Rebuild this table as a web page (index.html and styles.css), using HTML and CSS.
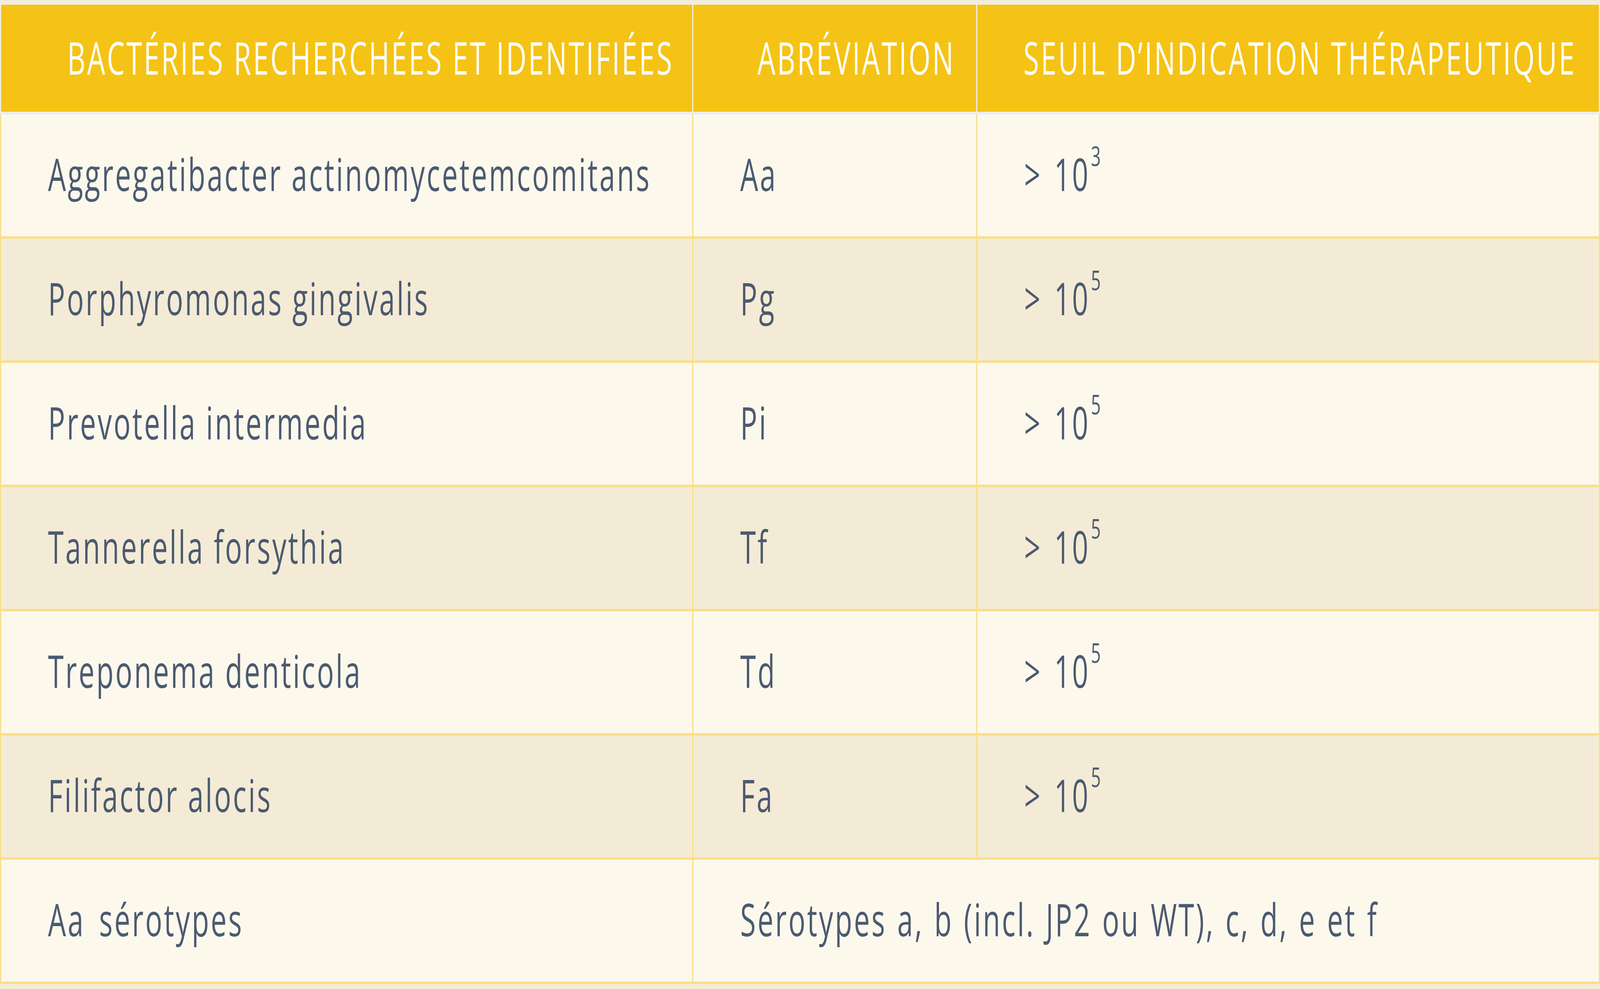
FILE: index.html
```html
<!DOCTYPE html>
<html lang="fr">
<head>
<meta charset="utf-8">
<title>Bactéries recherchées</title>
<link rel="stylesheet" href="styles.css">
</head>
<body>
<div class="table" role="table">
  <div class="row head" role="row">
    <div class="cell hcell first pad-h1" role="columnheader"><span class="txt">BACTÉRIES RECHERCHÉES ET IDENTIFIÉES</span></div>
    <div class="cell hcell pad-h2" role="columnheader"><span class="txt">ABRÉVIATION</span></div>
    <div class="cell hcell pad-h3" role="columnheader"><span class="txt">SEUIL D’INDICATION THÉRAPEUTIQUE</span></div>
  </div>
  <div class="row light" role="row">
    <div class="cell bcell first" role="cell"><span class="txt">Aggregatibacter actinomycetemcomitans</span></div>
    <div class="cell bcell" role="cell"><span class="txt">Aa</span></div>
    <div class="cell bcell" role="cell"><span class="txt thr">&gt; 10<sup>3</sup></span></div>
  </div>
  <div class="row dark" role="row">
    <div class="cell bcell first" role="cell"><span class="txt">Porphyromonas gingivalis</span></div>
    <div class="cell bcell" role="cell"><span class="txt">Pg</span></div>
    <div class="cell bcell" role="cell"><span class="txt thr">&gt; 10<sup>5</sup></span></div>
  </div>
  <div class="row light" role="row">
    <div class="cell bcell first" role="cell"><span class="txt">Prevotella intermedia</span></div>
    <div class="cell bcell" role="cell"><span class="txt">Pi</span></div>
    <div class="cell bcell" role="cell"><span class="txt thr">&gt; 10<sup>5</sup></span></div>
  </div>
  <div class="row dark" role="row">
    <div class="cell bcell first" role="cell"><span class="txt">Tannerella forsythia</span></div>
    <div class="cell bcell" role="cell"><span class="txt">Tf</span></div>
    <div class="cell bcell" role="cell"><span class="txt thr">&gt; 10<sup>5</sup></span></div>
  </div>
  <div class="row light" role="row">
    <div class="cell bcell first" role="cell"><span class="txt">Treponema denticola</span></div>
    <div class="cell bcell" role="cell"><span class="txt">Td</span></div>
    <div class="cell bcell" role="cell"><span class="txt thr">&gt; 10<sup>5</sup></span></div>
  </div>
  <div class="row dark" role="row">
    <div class="cell bcell first" role="cell"><span class="txt">Filifactor alocis</span></div>
    <div class="cell bcell" role="cell"><span class="txt">Fa</span></div>
    <div class="cell bcell" role="cell"><span class="txt thr">&gt; 10<sup>5</sup></span></div>
  </div>
  <div class="row light" role="row">
    <div class="cell bcell first" role="cell"><span class="txt sero">Aa sérotypes</span></div>
    <div class="cell bcell span2" role="cell"><span class="txt wide">Sérotypes a, b (incl. JP2 ou WT), c, d, e et f</span></div>
  </div>
</div>
</body>
</html>
```
FILE: styles.css
```css
:root {
  /* the reference was laid out on a 6502px-wide canvas; widths are kept proportional */
  --squash: 0.63;
  --vb: 0.0923vw;          /* 6px of the 6502 canvas */
  --head-line: #efede8;
  --body-line: #fadf88;
}

html, body {
  margin: 0;
  padding: 0;
}

body {
  background: #f3ebd5;
  padding-top: 5px;
  font-family: "Open Sans", "Noto Sans", sans-serif;
}

.table {
  display: grid;
  grid-template-columns: 2818fr 1154fr 2530fr;
}

.row {
  display: contents;
}

.cell {
  box-sizing: border-box;
  display: flex;
  align-items: center;
  min-width: 0;
  font-size: 115px;
  white-space: nowrap;
  line-height: 1.36;
}

.txt {
  display: inline-block;
  transform: scaleX(var(--squash));
  transform-origin: 0 50%;
}

/* header */
.hcell {
  height: 288px;
  background: #f5c315;
  color: #ffffff;
  letter-spacing: 7px;
  border-top: 7px solid var(--head-line);
  border-bottom: 7px solid var(--head-line);
  border-right: var(--vb) solid var(--head-line);
  padding-bottom: 4px;
}

.hcell.first {
  border-left: var(--vb) solid var(--head-line);
}

.pad-h1 {
  padding-left: 4.12vw;
}

.pad-h2 {
  padding-left: 4.01vw;
}

.pad-h3 {
  padding-left: 2.88vw;
}

/* body */
.bcell {
  height: 318px;
  color: #4c5a71;
  letter-spacing: 7px;
  padding-left: 2.92vw;
  padding-bottom: 8px;
  border-right: var(--vb) solid var(--body-line);
  border-bottom: 6px solid var(--body-line);
}

.bcell.first {
  border-left: var(--vb) solid var(--body-line);
}

.light .bcell {
  background: #fcf8ec;
}

.dark .bcell {
  background: #f3ebd5;
}

.span2 {
  grid-column: span 2;
}

.sero {
  word-spacing: 20px;
}

.wide {
  word-spacing: 6px;
}

.thr {
  word-spacing: 12px;
}

sup {
  font-size: 70px;
  line-height: 0;
  vertical-align: 64px;
  letter-spacing: 0;
  margin-left: 4px;
}
```
